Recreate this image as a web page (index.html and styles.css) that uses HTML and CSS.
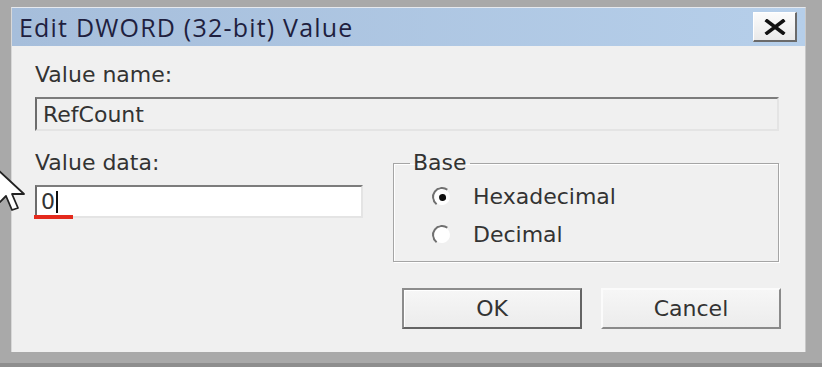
FILE: index.html
```html
<!DOCTYPE html>
<html lang="en">
<head>
    <meta charset="UTF-8">
    <title>Edit DWORD (32-bit) Value</title>
    <link rel="stylesheet" href="styles.css">
</head>
<body>
    <div class="frame">
        <div class="dialog">
            <div class="titlebar">
                <span class="title">Edit DWORD (32-bit) Value</span>
                <button class="close-btn" aria-label="Close">
                    <svg width="22" height="16" viewBox="0 0 22 16"><path d="M3 2 L19 14 M19 2 L3 14" stroke="#111" stroke-width="3.6" stroke-linecap="square"/></svg>
                </button>
            </div>
            <div class="content">
                <div class="label">Value name:</div>
                <div class="field field-name">RefCount</div>

                <div class="lower">
                    <div class="data-col">
                        <div class="label">Value data:</div>
                        <div class="field field-data"><span>0</span><span class="caret"></span></div>
                        <div class="underline"></div>
                    </div>
                    <fieldset class="base">
                        <legend>Base</legend>
                        <div class="radio-row"><span class="radio checked"></span>Hexadecimal</div>
                        <div class="radio-row"><span class="radio"></span>Decimal</div>
                    </fieldset>
                </div>

                <div class="buttons">
                    <button class="btn btn-default">OK</button>
                    <button class="btn">Cancel</button>
                </div>
            </div>
        </div>
        <svg class="pointer" width="44" height="48" viewBox="0 0 44 48">
            <path d="M8 2 L8 36 L16 28 L22 42 L28 40 L22 26 L34 26 Z" fill="#fff" stroke="#222" stroke-width="1.8" stroke-linejoin="round"/>
        </svg>
    </div>
</body>
</html>
```

FILE: styles.css
```css
body { margin: 0; background: #a7a7a7; font-family: "DejaVu Sans", Tahoma, sans-serif; }
.frame { position: relative; width: 822px; height: 367px; box-sizing: border-box; padding: 7px 16px 11px 11px; background: #a9a9a9; border-bottom: 4px solid #8e8e8e; }
.dialog { height: 100%; box-sizing: border-box; background: #f0f0f0; border-top: 1px solid #e6e9ee; border-left: 1px solid #d8d8d8; border-right: 1px solid #c8c8c8; display: flex; flex-direction: column; }
.titlebar { height: 38px; display: flex; align-items: center; justify-content: space-between; padding: 0 8px 0 7px; background: linear-gradient(to right, #a6bedb, #b6cfea); }
.title { font-family: "Open Sans", "Noto Sans", sans-serif; font-size: 25px; color: #1f1f3f; letter-spacing: 1.2px; }
.close-btn { width: 44px; height: 30px; padding: 0; display: flex; align-items: center; justify-content: center; background: linear-gradient(#fbfbfb, #e9e9e9); border: 1px solid #fff; border-right: 2px solid #6a6a6a; border-bottom: 2px solid #6a6a6a; }
.content { flex: 1; padding: 16px 26px 0 23px; color: #333; font-size: 22px; line-height: 26px; }
.label { height: 26px; }
.field { box-sizing: border-box; height: 34px; padding: 2px 6px; border: 2px solid; border-color: #7c7c7c #e4e4e4 #e4e4e4 #6c6c6c; line-height: 28px; }
.field-name { margin-top: 9px; background: #f0f0f0; }
.lower { display: grid; grid-template-columns: 328px 1fr; column-gap: 30px; margin-top: 19px; }
.data-col { position: relative; }
.field-data { margin-top: 9px; height: 33px; background: #fff; line-height: 26px; padding: 1px 4px; display: flex; align-items: center; }
.caret { display: inline-block; width: 2px; height: 22px; background: #111; margin-left: 1px; }
.underline { position: absolute; left: -1px; top: 65px; width: 39px; height: 4px; background: #e42a1d; }
.base { margin: 0; padding: 0 0 13px 38px; border: 1px solid #a5a5a5; box-shadow: inset 1px 1px 0 #fff, 1px 1px 0 #fff; }
.base legend { margin-left: -22px; padding: 0 3px; line-height: 26px; }
.radio-row { display: flex; align-items: center; height: 26px; margin-top: 8px; }
.radio-row + .radio-row { margin-top: 12px; }
.radio { box-sizing: border-box; width: 20px; height: 20px; margin-right: 21px; border-radius: 50%; background: #fff; border: 2px solid; border-color: #707070 #f0f0f0 #f0f0f0 #707070; transform: rotate(-8deg); display: flex; align-items: center; justify-content: center; }
.radio.checked::after { content: ""; width: 7px; height: 7px; border-radius: 50%; background: #111; }
.buttons { display: flex; justify-content: flex-end; gap: 19px; margin-top: 26px; margin-right: -2px; }
.btn { width: 180px; height: 41px; font-family: "DejaVu Sans", Tahoma, sans-serif; font-size: 22px; color: #333; background: linear-gradient(#f6f6f6, #ececec); border: 2px solid; border-color: #fbfbfb #8a8a8a #8a8a8a #fbfbfb; }
.btn-default { border: 2px solid #646464; border-top-color: #8c8c8c; border-left-color: #8c8c8c; box-shadow: inset 1px 1px 0 #fff; }
.pointer { position: absolute; left: -10px; top: 168px; }
```
